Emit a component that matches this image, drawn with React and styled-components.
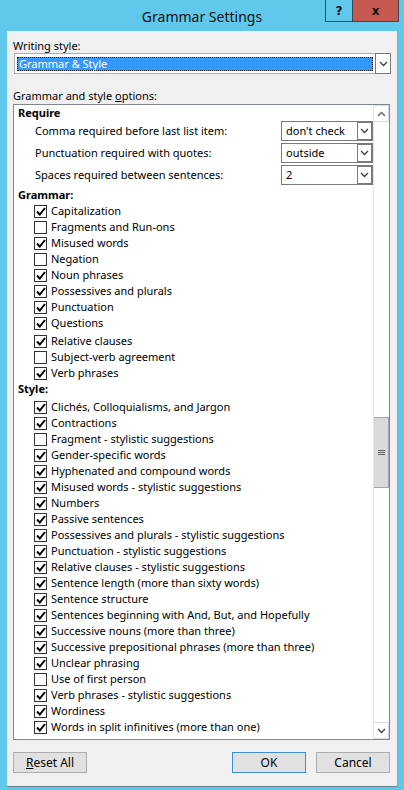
import React from 'react';
import styled, { createGlobalStyle } from 'styled-components';

const GlobalStyle = createGlobalStyle`
  html, body {
    margin: 0;
    padding: 0;
    background: #ffffff;
  }
  body {
    font-family: "Noto Sans", "Open Sans", sans-serif;
    font-size: 11px;
    color: #000;
  }
`;

// Window frame
const Window = styled.div`
  width: 404px;
  height: 790px;
  background: #60c8ea;
  display: flex;
  flex-direction: column;
  box-sizing: border-box;
`;

const TitleBar = styled.div`
  height: 31px;
  display: grid;
  flex-shrink: 0;
`;

const Title = styled.div`
  grid-area: 1 / 1;
  justify-self: center;
  align-self: center;
  font-size: 14px;
  color: #111;
  margin-top: 1px;
`;

const CaptionButtons = styled.div`
  grid-area: 1 / 1;
  justify-self: end;
  align-self: start;
  display: flex;
  margin-right: 5px;
`;

const CaptionButton = styled.div`
  width: ${(p) => p.$w}px;
  height: 22px;
  box-sizing: border-box;
  border: 1px solid #3b4a52;
  border-top: none;
  margin-left: ${(p) => (p.$first ? 0 : -1)}px;
  background: ${(p) => (p.$close ? '#c75a50' : '#60c8ea')};
  display: flex;
  align-items: center;
  justify-content: center;
  font-family: "DejaVu Sans", sans-serif;
  font-weight: bold;
  font-size: 12px;
  color: #111;
`;

const Client = styled.div`
  flex: 1;
  margin: 0 6px 3px 7px;
  background: #f0f0f0;
  border-right: 1px solid #8aa6b4;
  border-bottom: 1px solid #6a7f8a;
  padding: 8px 6px 0 6px;
  display: flex;
  flex-direction: column;
`;

const Label = styled.div`
  height: ${(p) => p.$h || 14}px;
  line-height: 14px;
  margin-top: ${(p) => p.$mt || 0}px;
`;

// Writing style combo box
const MainCombo = styled.div`
  margin-left: 1px;
  width: 377px;
  height: 21px;
  box-sizing: border-box;
  border: 1px solid #abadb3;
  background: #fff;
  display: flex;
`;

const Selection = styled.div`
  flex: 1;
  margin: 3px 2px 2px 2px;
  background: #3399ff;
  outline: 1px dotted #222;
  outline-offset: -1px;
  color: #fff;
  line-height: 14px;
  padding-left: 2px;
`;

const ComboButton = styled.div`
  width: ${(p) => p.$w || 15}px;
  box-sizing: border-box;
  border: 1px solid #7a7a7a;
  margin: ${(p) => p.$m || '0'};
  background: #fff;
  display: flex;
  align-items: center;
  justify-content: center;
`;

// Options list
const ListBox = styled.div`
  width: 377px;
  height: 636px;
  box-sizing: border-box;
  border: 1px solid #828790;
  background: #fff;
  display: flex;
`;

const ListContent = styled.div`
  flex: 1;
  display: flex;
  flex-direction: column;
  overflow: hidden;
`;

const Header = styled.div`
  height: ${(p) => p.$h || 16}px;
  line-height: 16px;
  padding-left: 4px;
  font-weight: bold;
  flex-shrink: 0;
`;

const SelectRow = styled.div`
  height: 22px;
  display: flex;
  justify-content: space-between;
  align-items: flex-start;
  padding-left: 21px;
  flex-shrink: 0;
`;

const SelectLabel = styled.div`
  line-height: 20px;
`;

const SmallCombo = styled.div`
  width: 92px;
  height: 20px;
  box-sizing: border-box;
  border: 1px solid #7a7a7a;
  display: flex;
  background: #fff;
`;

const ComboText = styled.div`
  flex: 1;
  line-height: 18px;
  padding-left: 4px;
  white-space: nowrap;
`;

const CheckRow = styled.div`
  height: 16px;
  display: flex;
  align-items: flex-start;
  padding-left: 20px;
  margin-top: ${(p) => p.$mt || 0}px;
  flex-shrink: 0;
`;

const Box = styled.div`
  width: 13px;
  height: 13px;
  box-sizing: border-box;
  border: 1px solid #333;
  margin-top: 2px;
  margin-right: 4px;
  background: #fff;
  display: flex;
  align-items: center;
  justify-content: center;
`;

const CheckText = styled.div`
  line-height: 16px;
  white-space: nowrap;
`;

// Scroll bar
const ScrollBar = styled.div`
  width: 16px;
  box-sizing: border-box;
  border-left: 1px solid #e6e6e6;
  background: #fff;
  display: flex;
  flex-direction: column;
`;

const ArrowBox = styled.div`
  height: 17px;
  box-sizing: border-box;
  border: 1px solid #dadada;
  border-left: none;
  display: flex;
  align-items: center;
  justify-content: center;
`;

const Track = styled.div`
  flex: 1;
  display: flex;
  flex-direction: column;
`;

const Thumb = styled.div`
  margin-top: 295px;
  height: 71px;
  box-sizing: border-box;
  border: 1px solid #a6a6a6;
  border-left: none;
  background: #dadada;
  display: flex;
  flex-direction: column;
  align-items: center;
  justify-content: center;
  gap: 1px;
`;

const Grip = styled.div`
  width: 7px;
  height: 1px;
  background: #606060;
`;

// Bottom buttons
const ButtonRow = styled.div`
  margin-top: 12px;
  width: 377px;
  display: flex;
  gap: 10px;
`;

const Button = styled.div`
  width: 74px;
  height: 21px;
  box-sizing: border-box;
  border: 1px solid ${(p) => (p.$default ? '#3c8fd0' : '#adadad')};
  background: #e1e1e1;
  display: flex;
  align-items: center;
  justify-content: center;
  font-size: 12px;
  margin-left: ${(p) => (p.$push ? 'auto' : '0')};
`;

const Chevron = ({ up }) => (
  <svg width="9" height="6" viewBox="0 0 9 6">
    <polyline
      points={up ? '1,5 4.5,1.5 8,5' : '1,1 4.5,4.5 8,1'}
      fill="none"
      stroke={up ? '#606060' : '#404040'}
      strokeWidth="1.3"
    />
  </svg>
);

const Check = () => (
  <svg width="10" height="9" viewBox="0 0 10 9">
    <polyline points="1,4.5 3.8,7.5 9,1" fill="none" stroke="#000" strokeWidth="2" />
  </svg>
);

const requireRows = [
  ['Comma required before last list item:', "don't check"],
  ['Punctuation required with quotes:', 'outside'],
  ['Spaces required between sentences:', '2'],
];

const grammar = [
  ['Capitalization', true],
  ['Fragments and Run-ons', false],
  ['Misused words', true],
  ['Negation', false],
  ['Noun phrases', true],
  ['Possessives and plurals', true],
  ['Punctuation', true],
  ['Questions', true],
  ['Relative clauses', true, 2],
  ['Subject-verb agreement', false],
  ['Verb phrases', true],
];

const style = [
  ['Clichés, Colloquialisms, and Jargon', true],
  ['Contractions', true],
  ['Fragment - stylistic suggestions', false],
  ['Gender-specific words', true],
  ['Hyphenated and compound words', true],
  ['Misused words - stylistic suggestions', true],
  ['Numbers', true],
  ['Passive sentences', true],
  ['Possessives and plurals - stylistic suggestions', true],
  ['Punctuation - stylistic suggestions', true],
  ['Relative clauses - stylistic suggestions', true],
  ['Sentence length (more than sixty words)', true],
  ['Sentence structure', true],
  ['Sentences beginning with And, But, and Hopefully', true],
  ['Successive nouns (more than three)', true],
  ['Successive prepositional phrases (more than three)', true],
  ['Unclear phrasing', true],
  ['Use of first person', false],
  ['Verb phrases - stylistic suggestions', true],
  ['Wordiness', true],
  ['Words in split infinitives (more than one)', true],
];

function CheckItem({ label, checked, mt }) {
  return (
    <CheckRow $mt={mt}>
      <Box>{checked && <Check />}</Box>
      <CheckText>{label}</CheckText>
    </CheckRow>
  );
}

export default function App() {
  return (
    <>
      <GlobalStyle />
      <Window>
        <TitleBar>
          <Title>Grammar Settings</Title>
          <CaptionButtons>
            <CaptionButton $w={28} $first>?</CaptionButton>
            <CaptionButton $w={47} $close>x</CaptionButton>
          </CaptionButtons>
        </TitleBar>
        <Client>
          <Label>Writing style:</Label>
          <MainCombo>
            <Selection>Grammar &amp; Style</Selection>
            <ComboButton $w={16} $m="-1px -1px -1px 0">
              <Chevron />
            </ComboButton>
          </MainCombo>
          <Label $mt={15} $h={15}>
            Grammar and style <u>o</u>ptions:
          </Label>
          <ListBox>
            <ListContent>
              <Header>Require</Header>
              {requireRows.map(([label, value]) => (
                <SelectRow key={label}>
                  <SelectLabel>{label}</SelectLabel>
                  <SmallCombo>
                    <ComboText>{value}</ComboText>
                    <ComboButton $w={15}>
                      <Chevron />
                    </ComboButton>
                  </SmallCombo>
                </SelectRow>
              ))}
              <Header>Grammar:</Header>
              {grammar.map(([label, checked, mt]) => (
                <CheckItem key={label} label={label} checked={checked} mt={mt} />
              ))}
              <Header $h={18}>Style:</Header>
              {style.map(([label, checked]) => (
                <CheckItem key={label} label={label} checked={checked} />
              ))}
            </ListContent>
            <ScrollBar>
              <ArrowBox>
                <Chevron up />
              </ArrowBox>
              <Track>
                <Thumb>
                  <Grip />
                  <Grip />
                  <Grip />
                </Thumb>
              </Track>
              <ArrowBox>
                <Chevron />
              </ArrowBox>
            </ScrollBar>
          </ListBox>
          <ButtonRow>
            <Button>
              <span>
                <u>R</u>eset All
              </span>
            </Button>
            <Button $default $push>
              OK
            </Button>
            <Button>Cancel</Button>
          </ButtonRow>
        </Client>
      </Window>
    </>
  );
}
